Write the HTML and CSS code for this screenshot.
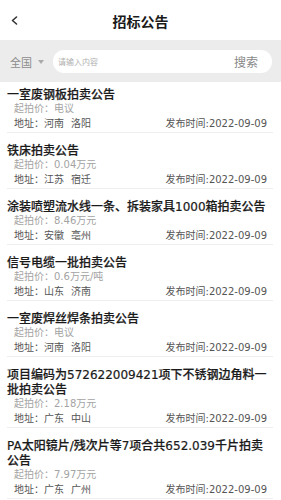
FILE: index.html
```html
<!DOCTYPE html>
<html lang="zh-CN">
<head>
<meta charset="utf-8">
<title>招标公告</title>
<link rel="stylesheet" href="styles.css">
</head>
<body>
<header class="topbar">
  <span class="back"><svg width="7" height="9" viewBox="0 0 7 9"><polyline points="5.5,1 1.5,4.5 5.5,8" fill="none" stroke="#333" stroke-width="1.6" stroke-linejoin="round" stroke-linecap="round"/></svg></span>
  <h1 class="title">招标公告</h1>
</header>
<div class="searchbar">
  <div class="region">全国<span class="caret"></span></div>
  <div class="input">
    <span class="placeholder">请输入内容</span>
    <span class="search-btn">搜索</span>
  </div>
</div>
<ul class="list">
  <li class="item">
    <div class="item-title">一室废钢板拍卖公告</div>
    <div class="price">起拍价：电议</div>
    <div class="meta"><span>地址：河南<span class="city">洛阳</span></span><span>发布时间:2022-09-09</span></div>
  </li>
  <li class="item">
    <div class="item-title">铁床拍卖公告</div>
    <div class="price">起拍价：0.04万元</div>
    <div class="meta"><span>地址：江苏<span class="city">宿迁</span></span><span>发布时间:2022-09-09</span></div>
  </li>
  <li class="item">
    <div class="item-title">涂装喷塑流水线一条、拆装家具1000箱拍卖公告</div>
    <div class="price">起拍价：8.46万元</div>
    <div class="meta"><span>地址：安徽<span class="city">亳州</span></span><span>发布时间:2022-09-09</span></div>
  </li>
  <li class="item">
    <div class="item-title">信号电缆一批拍卖公告</div>
    <div class="price">起拍价：0.6万元/吨</div>
    <div class="meta"><span>地址：山东<span class="city">济南</span></span><span>发布时间:2022-09-09</span></div>
  </li>
  <li class="item">
    <div class="item-title">一室废焊丝焊条拍卖公告</div>
    <div class="price">起拍价：电议</div>
    <div class="meta"><span>地址：河南<span class="city">洛阳</span></span><span>发布时间:2022-09-09</span></div>
  </li>
  <li class="item">
    <div class="item-title">项目编码为572622009421项下不锈钢边角料一批拍卖公告</div>
    <div class="price">起拍价：2.18万元</div>
    <div class="meta"><span>地址：广东<span class="city">中山</span></span><span>发布时间:2022-09-09</span></div>
  </li>
  <li class="item">
    <div class="item-title">PA太阳镜片/残次片等7项合共652.039千片拍卖公告</div>
    <div class="price">起拍价：7.97万元</div>
    <div class="meta"><span>地址：广东<span class="city">广州</span></span><span>发布时间:2022-09-09</span></div>
  </li>
</ul>
</body>
</html>
```

FILE: styles.css
```css
* { box-sizing: border-box; }
html, body { margin: 0; padding: 0; background: #fff; }
body {
  font-family: "DejaVu Sans", "Noto Sans CJK SC", sans-serif;
  color: #1a1a1a;
  overflow: hidden;
}
.topbar {
  height: 40px;
  display: flex;
  align-items: center;
  justify-content: center;
  position: relative;
  background: #fff;
}
.back {
  position: absolute;
  left: 11px;
  top: 16px;
  display: flex;
}
.title {
  margin: 0;
  padding-top: 2px;
  font-family: "Noto Sans CJK SC", sans-serif;
  font-size: 14px;
  font-weight: 700;
  color: #1a1a1a;
  line-height: 20px;
}
.searchbar {
  height: 42px;
  background: #ececec;
  display: flex;
  align-items: center;
  padding: 0 9px 0 10px;
}
.region {
  width: 43px;
  font-family: "Noto Sans CJK SC", sans-serif;
  font-size: 11px;
  color: #8c8c8c;
  display: flex;
  align-items: center;
  padding-top: 1px;
}
.caret {
  margin-left: 6px;
  width: 0;
  height: 0;
  border-left: 3px solid transparent;
  border-right: 3px solid transparent;
  border-top: 4px solid #aaa;
}
.input {
  flex: 1;
  height: 23px;
  background: #fff;
  border-radius: 11px;
  display: flex;
  align-items: center;
  justify-content: space-between;
  padding: 0 14px 0 5px;
}
.placeholder {
  font-family: "Noto Sans CJK SC", sans-serif;
  font-size: 8px;
  color: #b0b0b0;
}
.search-btn {
  font-family: "Noto Sans CJK SC", sans-serif;
  font-size: 12px;
  color: #888;
}
.list {
  list-style: none;
  margin: 0;
  padding: 0 8px 0 7px;
}
.item {
  padding: 6px 0 1px;
  margin-bottom: 5px;
  border-bottom: 1px solid #efefef;
}
.item-title {
  font-size: 12px;
  line-height: 15px;
  font-weight: 500;
  color: #1a1a1a;
  -webkit-text-stroke: 0.2px #1a1a1a;
}
.price {
  font-size: 10px;
  line-height: 12px;
  color: #a3a3a3;
  padding-left: 7px;
}
.meta {
  margin-top: 2px;
  font-size: 10px;
  line-height: 14px;
  color: #555;
  display: flex;
  justify-content: space-between;
  padding: 0 6px 0 7px;
}
.city {
  margin-left: 7px;
}
```
